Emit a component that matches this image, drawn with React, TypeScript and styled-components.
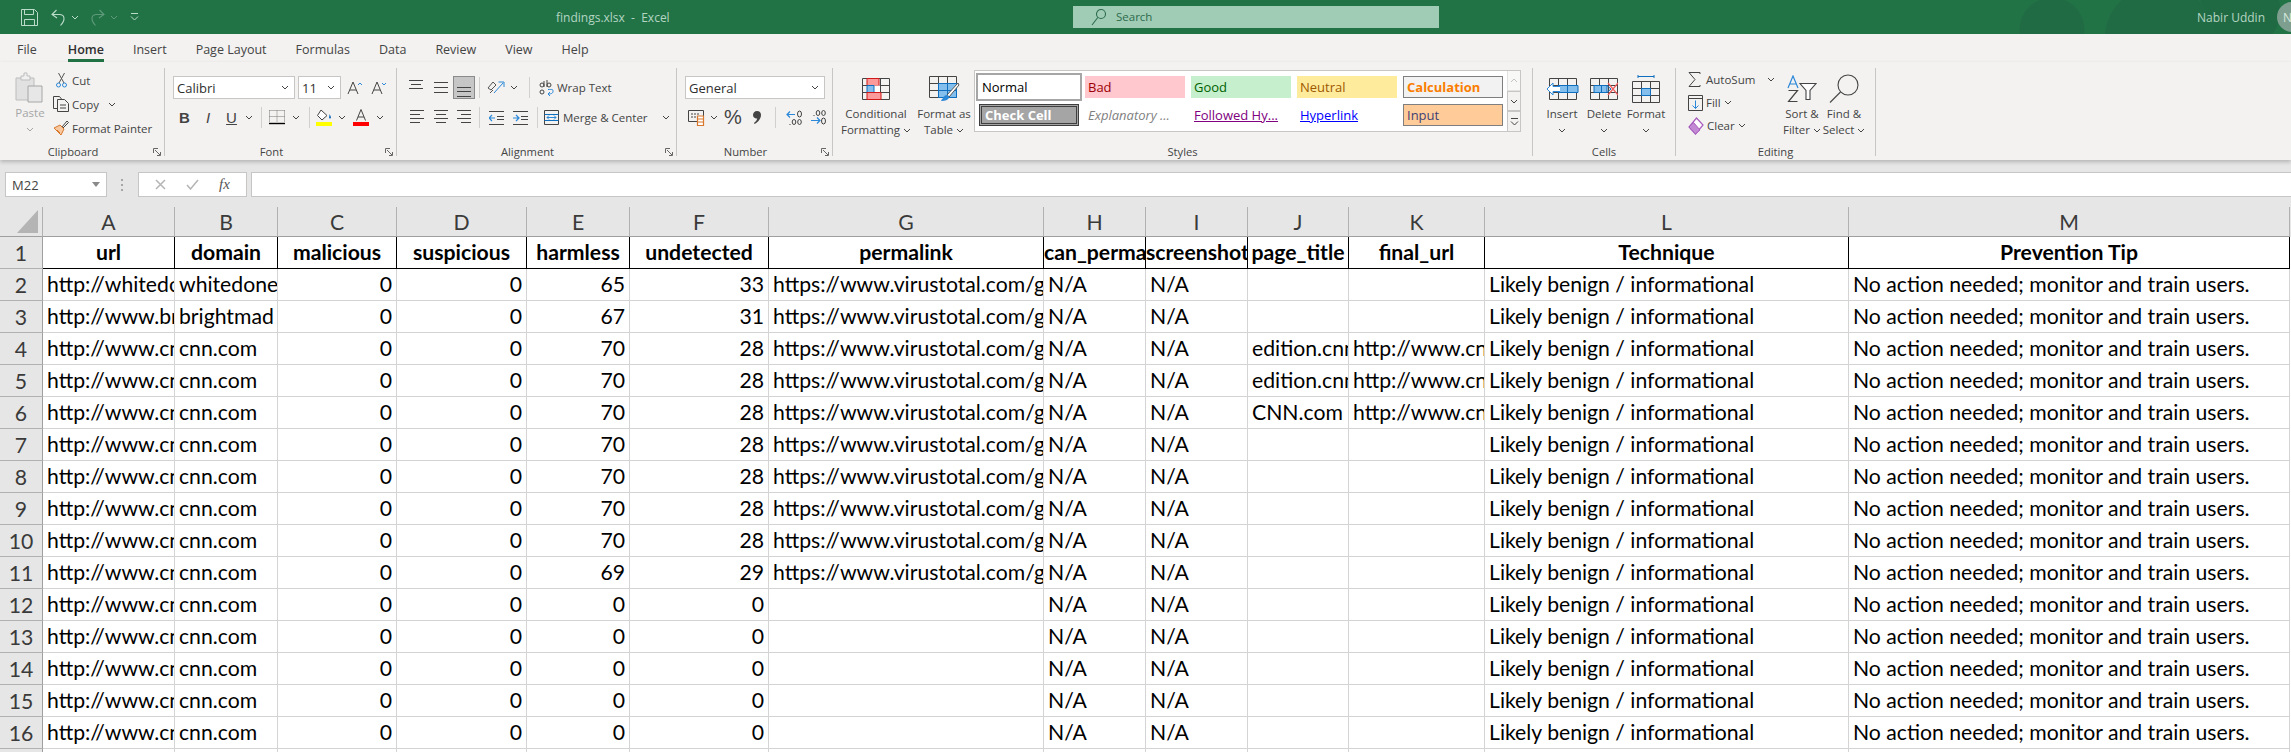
import React from 'react';
import styled, { createGlobalStyle } from 'styled-components';

const green = '#217346';
const ribbonBg = '#f3f2f1';
const sheetBg = '#e6e6e6';
const ink = '#444';
const uiFont = `'Open Sans', 'Noto Sans', sans-serif`;
const sheetFont = `Lato, 'Noto Sans', sans-serif`;
const blue = '#2b88d8';
const navy = '#106ebe';
const lightBlue = '#83beec';

const GlobalStyle = createGlobalStyle`
  html, body { margin: 0; padding: 0; height: 100%; overflow: hidden; background: ${sheetBg}; }
  #root { height: 100%; }
  * { box-sizing: border-box; }
`;

const Page = styled.div`
  width: 2291px;
  height: 752px;
  overflow: hidden;
  font-family: ${uiFont};
  font-size: 11.5px;
  color: ${ink};
`;

/* title bar */
const TitleBar = styled.div`
  height: 34px;
  display: grid;
  grid-template-columns: 556px 517px 366px 1fr;
  align-items: center;
  background:
    radial-gradient(circle at 2052px 30px, #206b44 0 32px, transparent 33px),
    radial-gradient(circle at 2160px 40px, #206b44 0 55px, transparent 56px),
    radial-gradient(circle at 2240px 10px, #1f6a42 0 40px, transparent 41px),
    ${green};
`;

const QuickAccess = styled.div`
  display: flex;
  align-items: center;
  padding-left: 21px;
`;

const QatSlot = styled.div<{ $w: number }>`
  width: ${({ $w }) => $w}px;
  display: flex;
  align-items: center;
`;

const DocTitle = styled.div`
  color: #b5d5c3;
  font-size: 12px;
  white-space: pre;
`;

const SearchBox = styled.div`
  height: 22px;
  margin-top: -1px;
  background: #a0ccb5;
  display: flex;
  align-items: center;
  gap: 9px;
  padding-left: 18px;
  color: #2c6b4c;
  font-size: 11.5px;
`;

const UserArea = styled.div`
  display: flex;
  justify-content: flex-end;
  align-items: center;
  gap: 12px;
  color: #b5d5c3;
  font-size: 12px;
  margin-right: -16px;
`;

const Avatar = styled.div`
  width: 30px;
  height: 30px;
  border-radius: 50%;
  background: #7e9f8f;
  color: #d6e8de;
  display: flex;
  align-items: center;
  justify-content: center;
  font-size: 12px;
`;

/* tabs */
const TabRow = styled.div`
  height: 28px;
  background: ${ribbonBg};
  display: flex;
  gap: 29px;
  padding-left: 17px;
`;

const Tab = styled.div<{ $active?: boolean }>`
  height: 28px;
  padding-top: 6px;
  font-size: 12.5px;
  line-height: 20px;
  color: ${({ $active }) => ($active ? '#2f2f2f' : ink)};
  font-weight: ${({ $active }) => ($active ? 600 : 400)};
  box-shadow: ${({ $active }) => ($active ? `inset 0 -3px 0 ${green}` : 'none')};
  margin-left: ${({ $active }) => ($active ? '2px' : '0')};
`;

/* ribbon */
const Ribbon = styled.div`
  position: relative;
  height: 98px;
  padding-top: 6px;
  background: ${ribbonBg};
  display: flex;
  box-shadow: 0 2px 4px rgba(0, 0, 0, 0.22);
`;

const Group = styled.div<{ $w: number }>`
  width: ${({ $w }) => $w}px;
  height: 88px;
  border-right: 1px solid #c8c6c4;
  display: flex;
  flex-direction: column;
`;

const GroupBody = styled.div`
  flex: 1;
  min-height: 0;
  display: flex;
`;

const LabelRow = styled.div<{ $exp?: boolean }>`
  height: 14px;
  margin-bottom: -3px;
  display: grid;
  grid-template-columns: ${({ $exp }) => ($exp ? '1fr auto 1fr 18px' : '1fr auto 1fr')};
  align-items: center;
  line-height: 14px;
  font-size: 11.2px;
`;

const LabelText = styled.span`
  grid-column: 2;
`;

const Expander = styled.div`
  grid-column: 4;
  justify-self: end;
  display: flex;
  margin-right: 3px;
`;

const Rows = styled.div<{ $left: number }>`
  padding: 8px 0 0 ${({ $left }) => $left}px;
  display: flex;
  flex-direction: column;
  gap: 7px;
`;

const Row = styled.div`
  height: 23px;
  display: flex;
  align-items: center;
`;

const Slot = styled.div<{ $w: number; $on?: boolean; $ml?: number }>`
  width: ${({ $w }) => $w}px;
  height: 23px;
  flex: none;
  margin-left: ${({ $ml }) => $ml || 0}px;
  display: flex;
  align-items: center;
  justify-content: center;
  background: ${({ $on }) => ($on ? '#c6c6c6' : 'transparent')};
  outline: ${({ $on }) => ($on ? '1px solid #8a8a8a' : 'none')};
  outline-offset: -1px;
`;

const VSep = styled.div<{ $gap: number }>`
  width: 1px;
  height: 21px;
  flex: none;
  margin: 0 ${({ $gap }) => $gap}px;
  background: #d2d0ce;
`;

const Combo = styled.div<{ $w: number; $ml?: number }>`
  width: ${({ $w }) => $w}px;
  height: 23px;
  flex: none;
  margin-left: ${({ $ml }) => $ml || 0}px;
  background: #fff;
  border: 1px solid #c8c6c4;
  display: flex;
  align-items: center;
  justify-content: space-between;
  padding: 0 5px 0 3px;
  color: #2f2f2f;
  font-size: 13px;
`;

const Glyph = styled.span<{ $b?: boolean; $i?: boolean; $u?: boolean; $size?: number }>`
  font-family: 'Liberation Sans', sans-serif;
  font-size: ${({ $size }) => $size || 14}px;
  font-weight: ${({ $b }) => ($b ? 700 : 400)};
  font-style: ${({ $i }) => ($i ? 'italic' : 'normal')};
  text-decoration: ${({ $u }) => ($u ? 'underline' : 'none')};
  color: ${ink};
`;

const TextBtn = styled.div<{ $gap?: number; $ml?: number }>`
  display: flex;
  align-items: center;
  gap: ${({ $gap }) => $gap ?? 5}px;
  margin-left: ${({ $ml }) => $ml || 0}px;
  white-space: nowrap;
`;

const IconCell = styled.div`
  width: 16px;
  flex: none;
  display: flex;
  justify-content: center;
`;

const PasteCol = styled.div`
  width: 53px;
  flex: none;
  padding: 4px 0 0 15px;
  display: flex;
  flex-direction: column;
  align-items: flex-start;
  color: #a6a6a6;
  line-height: 18px;
`;

const PasteCaption = styled.div`
  width: 30px;
  display: flex;
  flex-direction: column;
  align-items: center;
  gap: 5px;
  padding-top: 1px;
`;

const StackCol = styled.div<{ $w?: number; $left?: number }>`
  width: ${({ $w }) => ($w ? `${$w}px` : 'auto')};
  padding-left: ${({ $left }) => $left || 0}px;
  flex: none;
  display: flex;
  flex-direction: column;
`;

const StackRow = styled.div<{ $h: number }>`
  height: ${({ $h }) => $h}px;
  display: flex;
  align-items: center;
`;

const Big = styled.div<{ $w: number; $ml?: number }>`
  width: ${({ $w }) => $w}px;
  margin-left: ${({ $ml }) => $ml || 0}px;
  flex: none;
  display: flex;
  flex-direction: column;
  align-items: center;
  line-height: 16px;
  white-space: nowrap;
`;

const BigIcon = styled.div`
  height: 33px;
  margin-top: 4px;
  margin-bottom: 1px;
  display: flex;
  align-items: center;
  justify-content: center;
`;

const BigLine = styled.div`
  height: 16px;
  display: flex;
  align-items: center;
  gap: 3px;
`;

/* style gallery */
const Gallery = styled.div`
  width: 547px;
  height: 62px;
  margin-top: 2px;
  flex: none;
  background: #fff;
  border: 1px solid #c8c6c4;
  display: flex;
  justify-content: space-between;
`;

const GalleryGrid = styled.div`
  padding: 5px 0 0 4px;
  display: grid;
  grid-template-columns: repeat(5, 100px);
  grid-auto-rows: 22px;
  column-gap: 6px;
  row-gap: 6px;
`;

const StyleCell = styled.div<{ $bg?: string; $fg?: string; $border?: string; $b?: boolean; $i?: boolean; $u?: boolean; $dbl?: boolean }>`
  height: 22px;
  display: flex;
  align-items: center;
  padding-left: 3px;
  white-space: nowrap;
  font-size: 13px;
  background: ${({ $bg }) => $bg || 'transparent'};
  color: ${({ $fg }) => $fg || '#000'};
  border: ${({ $border }) => ($border ? `1px solid ${$border}` : 'none')};
  font-weight: ${({ $b }) => ($b ? 700 : 400)};
  font-style: ${({ $i }) => ($i ? 'italic' : 'normal')};
  text-decoration: ${({ $u }) => ($u ? 'underline' : 'none')};
  ${({ $dbl }) => ($dbl ? 'border: 3px double #3f3f3f;' : '')}
`;

const NormalCell = styled(StyleCell)`
  outline: 2px solid #a6a6a6;
  outline-offset: 1px;
`;

const GalleryScroll = styled.div`
  width: 14px;
  flex: none;
  display: flex;
  flex-direction: column;
  margin: -1px -1px -1px 0;
`;

const ScrollBtn = styled.div<{ $muted?: boolean }>`
  flex: 1;
  border: 1px solid #c8c6c4;
  background: ${ribbonBg};
  display: flex;
  align-items: center;
  justify-content: center;
  opacity: ${({ $muted }) => ($muted ? 0.5 : 1)};
`;

/* formula bar */
const FormulaBar = styled.div`
  height: 47px;
  background: ${sheetBg};
  padding: 12px 0 0 5px;
  display: flex;
  align-items: flex-start;
`;

const NameBox = styled.div`
  width: 102px;
  height: 25px;
  background: #fff;
  border: 1px solid #c8c6c4;
  display: flex;
  align-items: center;
  justify-content: space-between;
  padding: 0 6px;
  font-size: 13px;
`;

const Grip = styled.div`
  width: 31px;
  height: 25px;
  display: flex;
  align-items: center;
  justify-content: center;
`;

const FormulaButtons = styled.div`
  width: 109px;
  height: 25px;
  background: #fff;
  border: 1px solid #c8c6c4;
  display: flex;
  align-items: center;
  justify-content: space-around;
  padding: 0 6px;
`;

const Fx = styled.span`
  font-family: 'Liberation Serif', serif;
  font-style: italic;
  font-size: 15px;
  color: #555;
`;

const FormulaInput = styled.div`
  flex: 1;
  height: 25px;
  margin-left: 4px;
  background: #fff;
  border: 1px solid #c8c6c4;
  border-right: none;
`;

/* sheet */
const Sheet = styled.div`
  display: grid;
  grid-template-columns: 43px 132px 103px 119px 130px 103px 139px 275px 102px 102px 101px 136px 364px 441px 1fr;
  grid-template-rows: 30px 32px;
  grid-auto-rows: 32px;
  background: #fff;
  font-family: ${sheetFont};
  font-size: 21.2px;
  color: #000;
`;

const Corner = styled.div`
  background: ${sheetBg};
  border-right: 1px solid #b1b1b1;
  border-bottom: 1px solid #9f9f9f;
  display: flex;
  align-items: flex-end;
  justify-content: flex-end;
  padding: 0 4px 3px 0;
`;

const CornerMark = styled.div`
  width: 21px;
  height: 23px;
  background: #b4b4b4;
  clip-path: polygon(100% 0, 100% 100%, 0 100%);
`;

const ColHead = styled.div`
  background: ${sheetBg};
  border-right: 1px solid #b1b1b1;
  border-bottom: 1px solid #9f9f9f;
  display: flex;
  align-items: center;
  justify-content: center;
  color: #3a3a3a;
`;

const RowHead = styled.div`
  background: ${sheetBg};
  border-right: 1px solid #9f9f9f;
  border-bottom: 1px solid #b1b1b1;
  display: flex;
  align-items: center;
  justify-content: center;
  color: #3a3a3a;
`;

const Cell = styled.div<{ $right?: boolean }>`
  border-right: 1px solid #d4d4d4;
  border-bottom: 1px solid #d4d4d4;
  padding: 0 4px;
  line-height: 31px;
  white-space: nowrap;
  overflow: hidden;
  text-align: ${({ $right }) => ($right ? 'right' : 'left')};
`;

const HeadCell = styled.div`
  border-right: 1px solid #000;
  border-bottom: 1px solid #000;
  line-height: 31px;
  font-weight: 700;
  white-space: nowrap;
  overflow: hidden;
  text-align: center;
`;

const Tail = styled.div<{ $bg?: string }>`
  background: ${({ $bg }) => $bg || '#fff'};
`;

/* icons */
const Chevron = ({ color = ink }: { color?: string }) => (
  <svg width="8" height="5" viewBox="0 0 8 5" fill="none">
    <path d="M1 1l3 3 3-3" stroke={color} strokeWidth="1" />
  </svg>
);

const SaveIcon = () => (
  <svg width="17" height="17" viewBox="0 0 17 17" fill="none" stroke="#bcdccb" strokeWidth="1">
    <path d="M.5.5h13l3 3v13H.5z" />
    <path d="M3.5.5v5h9v-5M3.5 16.5v-6h10v6" />
  </svg>
);

const UndoIcon = ({ color }: { color: string }) => (
  <svg width="15" height="17" viewBox="0 0 15 17" fill="none" stroke={color} strokeWidth="1.1">
    <path d="M5.5 1L1 5.5l5 3.5M1 5.5h7.5c5 0 6.5 5 1 11" />
  </svg>
);

const RedoIcon = ({ color }: { color: string }) => (
  <svg width="15" height="17" viewBox="0 0 15 17" fill="none" stroke={color} strokeWidth="1.1">
    <path d="M9.5 1L14 5.5 9 9M14 5.5H6.5c-5 0-6.5 5-1 11" />
  </svg>
);

const QatIcon = ({ color = '#bcdccb' }: { color?: string }) => (
  <svg width="9" height="8" viewBox="0 0 9 8" fill="none" stroke={color}>
    <path d="M1 .5h7M1 3.5l3.5 3.5L8 3.5" />
  </svg>
);

const SearchGlass = () => (
  <svg width="16" height="18" viewBox="0 0 16 18" fill="none" stroke="#2c6b4c" strokeWidth="1.1">
    <circle cx="10" cy="6" r="4.5" />
    <path d="M6.8 9.5L1 17" />
  </svg>
);

const PasteIcon = () => (
  <svg width="28" height="31" viewBox="0 0 28 31" fill="none">
    <path d="M1 6h18v22H1z" fill="#e1e1e1" stroke="#bdbdbd" />
    <path d="M6 4h3V1h3v3h3v4H6z" fill="#f0f0f0" stroke="#bdbdbd" />
    <path d="M13 14h14v16H13z" fill="#e7e7e7" stroke="#a6a6a6" />
  </svg>
);

const CutIcon = () => (
  <svg width="11" height="16" viewBox="0 0 11 16" fill="none">
    <path d="M3 11L8.5 1M8 11L2.5 1" stroke="#555" />
    <circle cx="2.5" cy="13" r="2" stroke={blue} />
    <circle cx="8.5" cy="13" r="2" stroke={blue} />
  </svg>
);

const CopyIcon = () => (
  <svg width="16" height="16" viewBox="0 0 16 16" fill="none" stroke="#444">
    <path d="M4.5 12.5h-4v-12h6l2 2.5" />
    <path d="M4.5 3.5h7l4 4v8h-11z" fill={ribbonBg} />
    <path d="M7 9h6M7 12h6" />
  </svg>
);

const PainterIcon = () => (
  <svg width="16" height="16" viewBox="0 0 16 16" fill="none">
    <path d="M1 8l6-3 4 4-3 6z" fill="#f7c8a0" stroke="#d9782d" />
    <path d="M9 7l5-6 1.5 1.5-5.5 5.5" stroke="#444" />
    <path d="M4 10l3 3" stroke="#d9782d" />
  </svg>
);

const ExpanderIcon = () => (
  <svg width="8" height="8" viewBox="0 0 8 8" fill="none" stroke="#666">
    <path d="M.5 5V.5H5M2 2l5 5M4 7.5h3.5V4" />
  </svg>
);

const GrowFont = ({ up }: { up: boolean }) => (
  <svg width="16" height="14" viewBox="0 0 16 14" fill="none">
    <path d="M1 13L6 1l5 12M3 9h6" stroke="#444" />
    <path d={up ? 'M11 4l2-2 2 2' : 'M11 2l2 2 2-2'} stroke={blue} />
  </svg>
);

const BorderIcon = () => (
  <svg width="16" height="15" viewBox="0 0 16 15" fill="none">
    <path d="M.5.5h15M.5.5v12M15.5.5v12M8 .5v12M.5 6.5h15" stroke="#777" strokeDasharray="1 1" />
    <path d="M0 13.5h16" stroke="#000" strokeWidth="1.4" />
  </svg>
);

const FillIcon = () => (
  <svg width="17" height="17" viewBox="0 0 17 17" fill="none">
    <path d="M5 1l6 5.5L6 11 1.5 6.5z" stroke="#444" fill="#fff" />
    <path d="M13.5 5c1 2 1.5 3 1.5 3.5s-.5 1-1 1-1-.5-1-1 .5-1.5.5-3.5z" fill={navy} />
    <rect y="13" width="16" height="4" fill="#ffff00" />
  </svg>
);

const FontColorIcon = () => (
  <svg width="17" height="17" viewBox="0 0 17 17" fill="none">
    <path d="M3.5 11.5L8 .5l4.5 11M5 8h6" stroke="#444" />
    <rect y="13" width="16" height="4" fill="#f00" />
  </svg>
);

const AlignLines = ({ lines }: { lines: [number, number, number][] }) => (
  <svg width="16" height="21" viewBox="0 0 16 21" fill="none" stroke="#444">
    {lines.map(([y, x1, x2]) => (
      <path key={y} d={`M${x1} ${y}.5H${x2}`} />
    ))}
  </svg>
);

const OrientIcon = () => (
  <svg width="18" height="17" viewBox="0 0 18 17" fill="none">
    <path d="M1 9l5-6 3 3-5 5zM3 14l3-3" stroke="#555" />
    <path d="M7 14L16 4M11.5 3H17v5" stroke={blue} />
  </svg>
);

const IndentIcon = ({ dir }: { dir: 'left' | 'right' }) => (
  <svg width="15" height="14" viewBox="0 0 15 14" fill="none">
    <path d="M0 .5h15M0 13.5h15M8 5.5h7M8 8.5h7" stroke="#444" />
    <path d={dir === 'left' ? 'M6 7H0M3 4L0 7l3 3' : 'M0 7h6M3 4l3 3-3 3'} stroke={blue} strokeWidth="1.2" />
  </svg>
);

const WrapIcon = () => (
  <svg width="15" height="16" viewBox="0 0 15 16" fill="none">
    <path d="M9 9.5c4 0 5-.5 5 1.5s-1 3-5 3M11 12l-2 2 2 2" stroke={blue} />
    <circle cx="3" cy="12" r="2" stroke="#444" />
    <circle cx="3" cy="5" r="2" stroke="#444" />
    <path d="M5 1v6" stroke="#444" />
    <circle cx="10" cy="5" r="2" stroke="#444" />
    <path d="M8 0v7" stroke="#444" />
  </svg>
);

const MergeIcon = () => (
  <svg width="15" height="15" viewBox="0 0 15 15" fill="none">
    <path d="M.5.5h14v14H.5z" stroke="#444" />
    <path d="M.5 4.5h14M.5 10.5h14" stroke={navy} />
    <path d="M3 7.5h9M5 5.5l-2 2 2 2M10 5.5l2 2-2 2" stroke={blue} />
  </svg>
);

const AccountingIcon = () => (
  <svg width="17" height="17" viewBox="0 0 17 17" fill="none">
    <path d="M.5 1.5h15v11H.5z" stroke="#444" />
    <path d="M3 5h8M3 8h7" stroke="#444" strokeDasharray="2 1" />
    <path d="M9.5 7h6v9.5h-6z" fill="#fff" stroke="#d9782d" strokeWidth="1.2" />
    <path d="M9.5 10h6M9.5 13h6" stroke="#d9782d" />
  </svg>
);

const CommaIcon = () => (
  <svg width="8" height="13" viewBox="0 0 8 13">
    <path d="M4 0c2.5 0 4 1.6 4 4 0 3.5-2.6 7-6.5 9L1 12c2-1.6 3-3 3.200-4.500C2 7.800 0 6.300 0 4c0-2.300 1.700-4 4-4z" fill="#444" />
  </svg>
);

const DecimalIcon = ({ inc }: { inc: boolean }) => (
  <svg width="17" height="15" viewBox="0 0 17 15" fill="none">
    {inc ? (
      <path d="M1 4.5h8M4 1.5l-3 3 3 3" stroke={blue} strokeWidth="1.2" />
    ) : (
      <path d="M1 10.5h9M7 7.5l3 3-3 3" stroke={blue} strokeWidth="1.2" />
    )}
    {inc ? (
      <g stroke="#444">
        <ellipse cx="13.5" cy="4" rx="2" ry="3" />
        <ellipse cx="8" cy="12" rx="1.8" ry="2.5" />
        <ellipse cx="13.5" cy="12" rx="1.8" ry="2.5" />
        <path d="M3.5 14.5h1" />
      </g>
    ) : (
      <g stroke="#444">
        <ellipse cx="8" cy="3" rx="1.8" ry="2.5" />
        <ellipse cx="13.5" cy="3" rx="1.8" ry="2.5" />
        <ellipse cx="13.5" cy="11" rx="2" ry="3" />
        <path d="M3.5 5.5h1" />
      </g>
    )}
  </svg>
);

const GridBase = ({ w = 27, h = 21 }: { w?: number; h?: number }) => (
  <g stroke="#444" fill="none">
    <path d={`M.5.5h${w}v${h}H.5z`} />
    <path d={`M.5 7.5h${w}M.5 14.5h${w}M9.5.5v${h}M18.5.5v${h}`} />
  </g>
);

const CondIcon = () => (
  <svg width="28" height="22" viewBox="0 0 28 22">
    <GridBase />
    <path d="M5 .5h12v7H5z" fill="#fa9a9a" stroke="#d01818" />
    <path d="M9 7.5h9v7H9z" fill="#fff" />
    <path d="M5 7.5h7v7H5z" fill={lightBlue} stroke={navy} />
    <path d="M5 14.5h14v7H5z" fill="#fa9a9a" stroke="#d01818" />
  </svg>
);

const TableIcon = () => (
  <svg width="31" height="26" viewBox="0 0 31 26" fill="none">
    <GridBase />
    <path d="M9.5 7.500h18v14h-18z" fill={lightBlue} stroke={navy} />
    <path d="M9.5 14.5h18M18.5 7.5v14" stroke={navy} />
    <path d="M29 7L18 19l2 2L30 9z" fill="#fff" stroke="#555" />
    <path d="M13 25c-1 0-1-1-1-1 2 0 2-5 6-5 2 0 2 2 2 3-1 2-4 3-7 3z" fill={blue} />
  </svg>
);

const InsertCellsIcon = () => (
  <svg width="33" height="22" viewBox="0 0 33 22" fill="none">
    <g transform="translate(3 0)"><GridBase /></g>
    <path d="M12 7.5h20v7H12z" fill={lightBlue} stroke={navy} />
    <path d="M21.5 7.5v7" stroke={navy} />
    <path d="M14 8.5H7V5l-6 6 6 6v-3.5h7" fill="#fff" stroke={blue} />
  </svg>
);

const DeleteCellsIcon = () => (
  <svg width="28" height="22" viewBox="0 0 28 22" fill="none">
    <GridBase />
    <path d="M4 7.5h13v7H4z" fill={lightBlue} stroke={navy} />
    <path d="M11.5 7.5v7M17 7.5l4 3.5-4 3.5" stroke={navy} />
    <path d="M18 5l10 12M28 5L18 17" stroke="#f25c5c" strokeWidth="1.2" />
  </svg>
);

const FormatCellsIcon = () => (
  <svg width="28" height="28" viewBox="0 0 28 28" fill="none">
    <path d="M6 1.5h16M6 0v3M22 0v3" stroke={navy} />
    <g transform="translate(0 6)">
      <GridBase />
      <path d="M9.5 7.5h9v7h-9z" fill={lightBlue} stroke={navy} />
    </g>
  </svg>
);

const SumIcon = () => (
  <svg width="13" height="15" viewBox="0 0 13 15" fill="none" stroke="#444">
    <path d="M12 2V.5H1L7 7.5 1 14.5h11V13" />
  </svg>
);

const FillDownIcon = () => (
  <svg width="15" height="16" viewBox="0 0 15 16" fill="none">
    <path d="M.5.5h14v15H.5z" stroke="#444" />
    <path d="M.5 3.5h14" stroke="#444" />
    <path d="M7.5 5.5v8M4.5 10.5l3 3 3-3" stroke={blue} />
  </svg>
);

const ClearIcon = () => (
  <svg width="16" height="18" viewBox="0 0 16 18" fill="none">
    <path d="M8.5 1l6.500 7-7.500 9-6.500-7z" fill="#fff" stroke="#a75bbd" strokeWidth="1.2" />
    <path d="M5.5 5.500L12 13l-4.500 4-6.500-7z" fill="#c38ad4" stroke="#a75bbd" />
  </svg>
);

const SortIcon = () => (
  <svg width="30" height="27" viewBox="0 0 30 27" fill="none">
    <path d="M1 13L6 1l5 12M3 9h6" stroke={blue} strokeWidth="1.2" />
    <path d="M1.5 15.500h9l-9 11h9" stroke="#444" strokeWidth="1.2" />
    <path d="M13 8.500h16l-6 7v9h-4v-9z" stroke="#444" strokeWidth="1.1" fill="#fff" />
  </svg>
);

const FindIcon = () => (
  <svg width="30" height="29" viewBox="0 0 30 29" fill="none" stroke="#444" strokeWidth="1.1">
    <circle cx="19" cy="11" r="10" />
    <path d="M11.5 18L1 28.5" />
  </svg>
);

const CloseX = () => (
  <svg width="11" height="11" viewBox="0 0 11 11" fill="none" stroke="#b5b5b5" strokeWidth="1.5">
    <path d="M1 1l9 9M10 1l-9 9" />
  </svg>
);

const CheckMark = () => (
  <svg width="13" height="11" viewBox="0 0 13 11" fill="none" stroke="#b5b5b5" strokeWidth="1.5">
    <path d="M1 6l3.5 4L12 1" />
  </svg>
);

const GripDots = () => (
  <svg width="3" height="14" viewBox="0 0 3 14" fill="#a6a6a6">
    <rect y="1" width="2" height="2" />
    <rect y="6" width="2" height="2" />
    <rect y="11" width="2" height="2" />
  </svg>
);

/* data */
const columns = ['A', 'B', 'C', 'D', 'E', 'F', 'G', 'H', 'I', 'J', 'K', 'L', 'M'];
const headers = [
  'url', 'domain', 'malicious', 'suspicious', 'harmless', 'undetected', 'permalink',
  'can_permalink', 'screenshot', 'page_title', 'final_url', 'Technique', 'Prevention Tip',
];
const vtLink = 'https://www.virustotal.com/gui';
const cnnUrl = 'http://www.cnn.com';

type Finding = [string, string, number, number, string, string];

const findings: Finding[] = [
  ['http://whitedone', 'whitedone', 65, 33, '', ''],
  ['http://www.brightmad', 'brightmad', 67, 31, '', ''],
  [cnnUrl, 'cnn.com', 70, 28, 'edition.cnn.com', cnnUrl],
  [cnnUrl, 'cnn.com', 70, 28, 'edition.cnn.com', cnnUrl],
  [cnnUrl, 'cnn.com', 70, 28, 'CNN.com', cnnUrl],
  [cnnUrl, 'cnn.com', 70, 28, '', ''],
  [cnnUrl, 'cnn.com', 70, 28, '', ''],
  [cnnUrl, 'cnn.com', 70, 28, '', ''],
  [cnnUrl, 'cnn.com', 70, 28, '', ''],
  [cnnUrl, 'cnn.com', 69, 29, '', ''],
  [cnnUrl, 'cnn.com', 0, 0, '', ''],
  [cnnUrl, 'cnn.com', 0, 0, '', ''],
  [cnnUrl, 'cnn.com', 0, 0, '', ''],
  [cnnUrl, 'cnn.com', 0, 0, '', ''],
  [cnnUrl, 'cnn.com', 0, 0, '', ''],
  [cnnUrl, 'cnn.com', 0, 0, '', ''],
];

const GroupLabel = ({ text, expander }: { text: string; expander?: boolean }) => (
  <LabelRow $exp={expander}>
    <LabelText>{text}</LabelText>
    {expander && (
      <Expander>
        <ExpanderIcon />
      </Expander>
    )}
  </LabelRow>
);

const App: React.FC = () => (
  <Page>
    <GlobalStyle />
    <TitleBar>
      <QuickAccess>
        <QatSlot $w={30}><SaveIcon /></QatSlot>
        <QatSlot $w={20}><UndoIcon color="#bcdccb" /></QatSlot>
        <QatSlot $w={19}><Chevron color="#bcdccb" /></QatSlot>
        <QatSlot $w={20}><RedoIcon color="#5f9a7a" /></QatSlot>
        <QatSlot $w={20}><Chevron color="#5f9a7a" /></QatSlot>
        <QatSlot $w={10}><QatIcon /></QatSlot>
      </QuickAccess>
      <DocTitle>findings.xlsx  -  Excel</DocTitle>
      <SearchBox>
        <SearchGlass />
        Search
      </SearchBox>
      <UserArea>
        Nabir Uddin
        <Avatar>NU</Avatar>
      </UserArea>
    </TitleBar>

    <TabRow>
      <Tab>File</Tab>
      <Tab $active>Home</Tab>
      <Tab>Insert</Tab>
      <Tab>Page Layout</Tab>
      <Tab>Formulas</Tab>
      <Tab>Data</Tab>
      <Tab>Review</Tab>
      <Tab>View</Tab>
      <Tab>Help</Tab>
    </TabRow>

    <Ribbon>
      <Group $w={165}>
        <GroupBody>
          <PasteCol>
            <PasteIcon />
            <PasteCaption>
              Paste
              <Chevron color="#a6a6a6" />
            </PasteCaption>
          </PasteCol>
          <StackCol>
            <StackRow $h={24}><TextBtn $gap={3}><IconCell><CutIcon /></IconCell><span>Cut</span></TextBtn></StackRow>
            <StackRow $h={24}>
              <TextBtn $gap={3}><IconCell><CopyIcon /></IconCell><span>Copy</span></TextBtn>
              <TextBtn $ml={9}><Chevron /></TextBtn>
            </StackRow>
            <StackRow $h={24}><TextBtn $gap={3}><IconCell><PainterIcon /></IconCell><span>Format Painter</span></TextBtn></StackRow>
          </StackCol>
        </GroupBody>
        <GroupLabel text="Clipboard" expander />
      </Group>

      <Group $w={232}>
        <GroupBody>
          <Rows $left={8}>
            <Row>
              <Combo $w={122}>Calibri<Chevron /></Combo>
              <Combo $w={43} $ml={3}>11<Chevron /></Combo>
              <Slot $w={24} $ml={2}><GrowFont up /></Slot>
              <Slot $w={24}><GrowFont up={false} /></Slot>
            </Row>
            <Row>
              <Slot $w={23}><Glyph $b $size={15}>B</Glyph></Slot>
              <Slot $w={24}><Glyph $i $size={15}>I</Glyph></Slot>
              <Slot $w={23}><Glyph $u $size={15}>U</Glyph></Slot>
              <Slot $w={12}><Chevron /></Slot>
              <VSep $gap={6} />
              <Slot $w={18}><BorderIcon /></Slot>
              <Slot $w={20}><Chevron /></Slot>
              <VSep $gap={3} />
              <Slot $w={22}><FillIcon /></Slot>
              <Slot $w={14}><Chevron /></Slot>
              <Slot $w={25}><FontColorIcon /></Slot>
              <Slot $w={12}><Chevron /></Slot>
            </Row>
          </Rows>
        </GroupBody>
        <GroupLabel text="Font" expander />
      </Group>

      <Group $w={280}>
        <GroupBody>
          <Rows $left={8}>
            <Row>
              <Slot $w={24}><AlignLines lines={[[3, 0, 14], [7, 2, 12], [11, 0, 14]]} /></Slot>
              <Slot $w={24}><AlignLines lines={[[5, 1, 15], [10, 1, 15], [15, 1, 15]]} /></Slot>
              <Slot $w={22} $on><AlignLines lines={[[10, 1, 15], [14, 1, 15], [19, 1, 15]]} /></Slot>
              <VSep $gap={4} />
              <Slot $w={24}><OrientIcon /></Slot>
              <Slot $w={12}><Chevron /></Slot>
              <VSep $gap={9} />
              <TextBtn $gap={3}><WrapIcon /><span>Wrap Text</span></TextBtn>
            </Row>
            <Row>
              <Slot $w={24}><AlignLines lines={[[3, 1, 15], [7, 1, 11], [11, 1, 15], [15, 1, 11]]} /></Slot>
              <Slot $w={24}><AlignLines lines={[[3, 1, 15], [7, 3, 13], [11, 1, 15], [15, 3, 13]]} /></Slot>
              <Slot $w={22}><AlignLines lines={[[3, 1, 15], [7, 5, 15], [11, 1, 15], [15, 5, 15]]} /></Slot>
              <VSep $gap={4} />
              <Slot $w={24}><IndentIcon dir="left" /></Slot>
              <Slot $w={24}><IndentIcon dir="right" /></Slot>
              <VSep $gap={5} />
              <TextBtn $gap={4} $ml={1}><MergeIcon /><span>Merge &amp; Center</span></TextBtn>
              <TextBtn $ml={14}><Chevron /></TextBtn>
            </Row>
          </Rows>
        </GroupBody>
        <GroupLabel text="Alignment" expander />
      </Group>

      <Group $w={156}>
        <GroupBody>
          <Rows $left={8}>
            <Row><Combo $w={140}>General<Chevron /></Combo></Row>
            <Row>
              <Slot $w={22}><AccountingIcon /></Slot>
              <Slot $w={14}><Chevron /></Slot>
              <Slot $w={24}><Glyph $size={20}>%</Glyph></Slot>
              <Slot $w={24}><CommaIcon /></Slot>
              <VSep $gap={6} />
              <Slot $w={24}><DecimalIcon inc /></Slot>
              <Slot $w={24}><DecimalIcon inc={false} /></Slot>
            </Row>
          </Rows>
        </GroupBody>
        <GroupLabel text="Number" expander />
      </Group>

      <Group $w={700}>
        <GroupBody>
          <Big $w={76} $ml={5}>
            <BigIcon><CondIcon /></BigIcon>
            <BigLine>Conditional</BigLine>
            <BigLine>Formatting <Chevron /></BigLine>
          </Big>
          <Big $w={60}>
            <BigIcon><TableIcon /></BigIcon>
            <BigLine>Format as</BigLine>
            <BigLine>Table <Chevron /></BigLine>
          </Big>
          <Gallery>
            <GalleryGrid>
              <NormalCell $bg="#fff">Normal</NormalCell>
              <StyleCell $bg="#ffc7ce" $fg="#9c0006">Bad</StyleCell>
              <StyleCell $bg="#c6efce" $fg="#006100">Good</StyleCell>
              <StyleCell $bg="#ffeb9c" $fg="#9c5700">Neutral</StyleCell>
              <StyleCell $bg="#f2f2f2" $fg="#fa7d00" $border="#7f7f7f" $b>Calculation</StyleCell>
              <StyleCell $bg="#a5a5a5" $fg="#fff" $b $dbl>Check Cell</StyleCell>
              <StyleCell $fg="#7f7f7f" $i>Explanatory ...</StyleCell>
              <StyleCell $fg="#800080" $u>Followed Hy...</StyleCell>
              <StyleCell $fg="#0000ff" $u>Hyperlink</StyleCell>
              <StyleCell $bg="#ffcc99" $fg="#3f3f76" $border="#7f7f7f">Input</StyleCell>
            </GalleryGrid>
            <GalleryScroll>
              <ScrollBtn $muted><svg width="8" height="5" viewBox="0 0 8 5" fill="none"><path d="M1 4l3-3 3 3" stroke="#888" /></svg></ScrollBtn>
              <ScrollBtn><Chevron /></ScrollBtn>
              <ScrollBtn><QatIcon color="#444" /></ScrollBtn>
            </GalleryScroll>
          </Gallery>
        </GroupBody>
        <GroupLabel text="Styles" />
      </Group>

      <Group $w={143}>
        <GroupBody>
          <Big $w={42} $ml={8}>
            <BigIcon><InsertCellsIcon /></BigIcon>
            <BigLine>Insert</BigLine>
            <BigLine><Chevron /></BigLine>
          </Big>
          <Big $w={42}>
            <BigIcon><DeleteCellsIcon /></BigIcon>
            <BigLine>Delete</BigLine>
            <BigLine><Chevron /></BigLine>
          </Big>
          <Big $w={42}>
            <BigIcon><FormatCellsIcon /></BigIcon>
            <BigLine>Format</BigLine>
            <BigLine><Chevron /></BigLine>
          </Big>
        </GroupBody>
        <GroupLabel text="Cells" />
      </Group>

      <Group $w={200}>
        <GroupBody>
          <StackCol $w={104} $left={12}>
            <StackRow $h={23}><TextBtn $gap={5}><SumIcon /><span>AutoSum</span><TextBtn $ml={7}><Chevron /></TextBtn></TextBtn></StackRow>
            <StackRow $h={23}><TextBtn $gap={3}><FillDownIcon /><span>Fill</span><Chevron /></TextBtn></StackRow>
            <StackRow $h={23}><TextBtn $gap={3}><ClearIcon /><span>Clear</span><Chevron /></TextBtn></StackRow>
          </StackCol>
          <Big $w={44}>
            <BigIcon><SortIcon /></BigIcon>
            <BigLine>Sort &amp;</BigLine>
            <BigLine>Filter <Chevron /></BigLine>
          </Big>
          <Big $w={40}>
            <BigIcon><FindIcon /></BigIcon>
            <BigLine>Find &amp;</BigLine>
            <BigLine>Select <Chevron /></BigLine>
          </Big>
        </GroupBody>
        <GroupLabel text="Editing" />
      </Group>
    </Ribbon>

    <FormulaBar>
      <NameBox>M22<svg width="8" height="5" viewBox="0 0 8 5"><path d="M0 0h8L4 5z" fill="#8a8a8a" /></svg></NameBox>
      <Grip><GripDots /></Grip>
      <FormulaButtons>
        <CloseX />
        <CheckMark />
        <Fx>fx</Fx>
      </FormulaButtons>
      <FormulaInput />
    </FormulaBar>

    <Sheet>
      <Corner><CornerMark /></Corner>
      {columns.map((c) => (
        <ColHead key={c}>{c}</ColHead>
      ))}
      <Tail $bg={sheetBg} />

      <RowHead>1</RowHead>
      {headers.map((h) => (
        <HeadCell key={h}>{h}</HeadCell>
      ))}
      <Tail />

      {findings.map(([url, domain, harmless, undetected, title, finalUrl], i) => (
        <React.Fragment key={i}>
          <RowHead>{i + 2}</RowHead>
          <Cell>{url}</Cell>
          <Cell>{domain}</Cell>
          <Cell $right>0</Cell>
          <Cell $right>0</Cell>
          <Cell $right>{harmless}</Cell>
          <Cell $right>{undetected}</Cell>
          <Cell>{harmless > 0 ? vtLink : ''}</Cell>
          <Cell>N/A</Cell>
          <Cell>N/A</Cell>
          <Cell>{title}</Cell>
          <Cell>{finalUrl}</Cell>
          <Cell>Likely benign / informational</Cell>
          <Cell>No action needed; monitor and train users.</Cell>
          <Tail />
        </React.Fragment>
      ))}
    </Sheet>
  </Page>
);

export default App;
